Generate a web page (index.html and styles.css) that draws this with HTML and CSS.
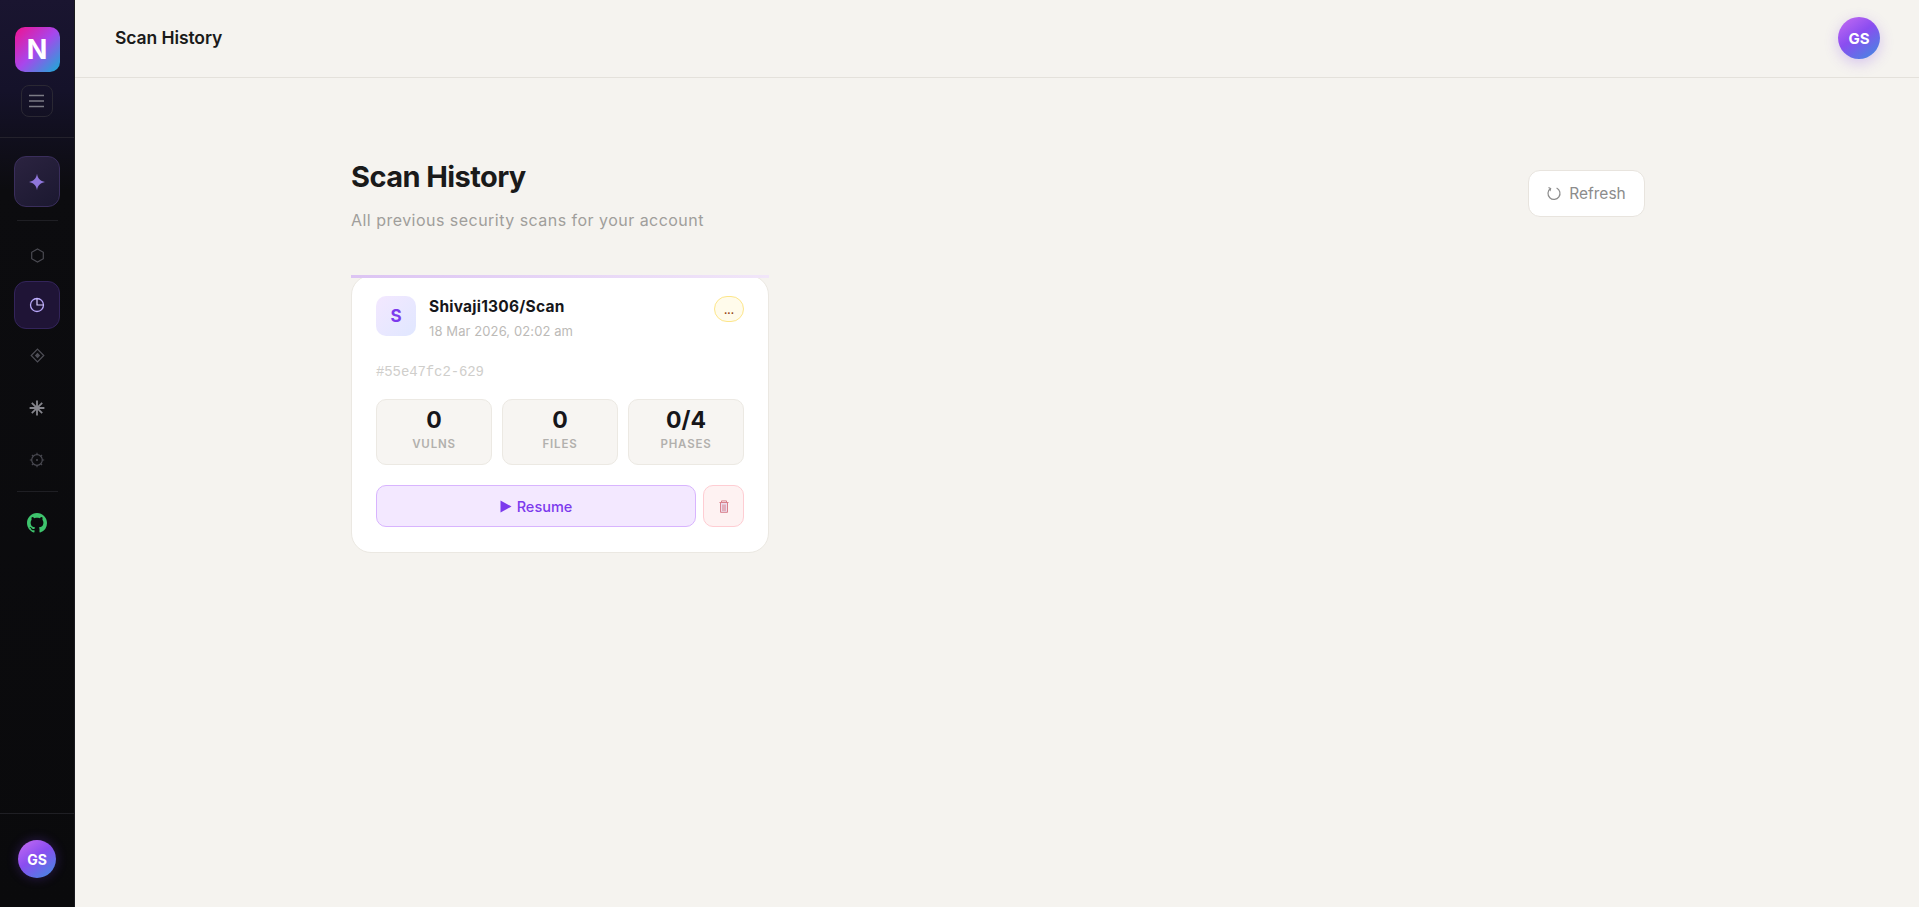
FILE: index.html
```html
<!DOCTYPE html>
<html lang="en">
<head>
<meta charset="utf-8">
<title>Scan History</title>
<link rel="stylesheet" href="styles.css">
</head>
<body>
<div class="app">
  <aside class="sidebar">
    <div class="side-top">
      <div class="logo">N</div>
      <button class="menu-btn" aria-label="Menu">
        <svg width="16" height="14" viewBox="0 0 16 14"><path d="M0 1.500h15M0 7h15M0 12.500h15" stroke="#7b7b85" stroke-width="1.600" fill="none"/></svg>
      </button>
    </div>
    <nav class="side-nav">
      <a class="spark">
        <svg width="18" height="18" viewBox="0 0 18 18"><path d="M9 .8C9.800 5.600 12.200 8.100 17 9c-4.800.9-7.200 3.400-8 8.200C8.200 12.400 5.800 9.900 1 9c4.800-.9 7.200-3.400 8-8.200z" fill="#8f76dc"/></svg>
      </a>
      <hr class="rule">
      <a class="item">
        <svg width="15" height="15" viewBox="0 0 15 15"><path d="M7.500 1l5.800 3.250v6.500L7.500 14l-5.800-3.250v-6.500z" fill="none" stroke="#4a4a52" stroke-width="1.200"/></svg>
      </a>
      <a class="item active">
        <svg width="16" height="16" viewBox="0 0 16 16"><circle cx="8" cy="8" r="6.500" fill="none" stroke="#b9a8fb" stroke-width="1.300"/><path d="M8 1.500V8h6.500" fill="none" stroke="#d9ceff" stroke-width="1.200"/></svg>
      </a>
      <a class="item">
        <svg width="15" height="15" viewBox="0 0 15 15"><path d="M7.500 1.200l6.300 6.300-6.300 6.300-6.300-6.300z" fill="none" stroke="#4e4e56" stroke-width="1.200"/><path d="M7.500 4.800l2.700 2.700-2.700 2.700-2.700-2.700z" fill="#4e4e56"/></svg>
      </a>
      <a class="item item-tall">
        <svg width="16" height="16" viewBox="0 0 16 16"><path d="M8 .6v14.800M.6 8h14.800M2.800 2.800l10.400 10.400M13.200 2.800L2.800 13.200" stroke="#85858c" stroke-width="1.800" fill="none"/><circle cx="8" cy="8" r="2" fill="#85858c"/></svg>
      </a>
      <a class="item item-short">
        <svg width="16" height="16" viewBox="0 0 16 16"><circle cx="8" cy="8" r="5.300" fill="none" stroke="#4a4a52" stroke-width="1.200"/><circle cx="8" cy="8" r="1" fill="#4a4a52"/><path d="M8 .8v2M8 13.200v2M.8 8h2M13.200 8h2M2.900 2.900l1.400 1.400M11.700 11.700l1.400 1.400M13.100 2.900l-1.400 1.400M4.300 11.700l-1.400 1.400" stroke="#4a4a52" stroke-width="1.100"/></svg>
      </a>
      <hr class="rule rule-low">
      <a class="item item-git">
        <svg width="20" height="20" viewBox="0 0 16 16"><path fill="#3ec46d" d="M8 0C3.580 0 0 3.580 0 8c0 3.540 2.290 6.530 5.470 7.590.4.070.55-.17.55-.38 0-.19-.01-.82-.01-1.490-2.010.37-2.530-.49-2.690-.94-.09-.23-.48-.94-.82-1.130-.28-.15-.68-.52-.01-.53.63-.01 1.080.58 1.230.82.72 1.210 1.870.87 2.330.66.070-.52.28-.87.51-1.070-1.780-.2-3.640-.89-3.640-3.950 0-.87.31-1.590.82-2.150-.08-.2-.36-1.020.08-2.120 0 0 .67-.21 2.200.82.640-.18 1.320-.27 2-.27s1.360.09 2 .27c1.530-1.040 2.200-.82 2.200-.82.44 1.100.16 1.920.08 2.120.51.560.82 1.270.82 2.150 0 3.070-1.870 3.750-3.650 3.950.29.250.54.730.54 1.480 0 1.070-.01 1.930-.01 2.200 0 .210.150.460.550.380A8.010 8.010 0 0 0 16 8c0-4.420-3.580-8-8-8z"/></svg>
      </a>
    </nav>
    <div class="side-foot">
      <div class="avatar avatar-side">GS</div>
    </div>
  </aside>
  <div class="main">
    <header class="topbar">
      <div class="top-title">Scan History</div>
      <div class="avatar avatar-top">GS</div>
    </header>
    <main class="content">
      <div class="page-head">
        <div>
          <h1 class="page-title">Scan History</h1>
          <p class="page-sub">All previous security scans for your account</p>
        </div>
        <button class="refresh">
          <svg width="15" height="15" viewBox="0 0 15 15"><path d="M3.400 2.600A6 6 0 1 0 9.600 2" fill="none" stroke="#8c8c8c" stroke-width="1.200"/><path d="M1.500 1.400l2.200 1.200-.7 2.500" fill="none" stroke="#8c8c8c" stroke-width="1.100"/></svg>
          <span>Refresh</span>
        </button>
      </div>
      <div class="grid">
        <article class="card">
          <div class="card-head">
            <div class="repo-icon">S</div>
            <div class="repo-info">
              <div class="repo-name">Shivaji1306/Scan</div>
              <div class="repo-date">18 Mar 2026, 02:02 am</div>
            </div>
            <div class="badge">...</div>
          </div>
          <div class="scan-id">#55e47fc2-629</div>
          <div class="stats">
            <div class="stat"><div class="stat-val">0</div><div class="stat-label">VULNS</div></div>
            <div class="stat"><div class="stat-val">0</div><div class="stat-label">FILES</div></div>
            <div class="stat"><div class="stat-val">0/4</div><div class="stat-label">PHASES</div></div>
          </div>
          <div class="actions">
            <button class="resume"><svg width="12" height="13" viewBox="0 0 12 13"><path d="M.5.5l11 6-11 6z" fill="#7c3aed"/></svg>Resume</button>
            <button class="trash" aria-label="Delete">
              <svg width="10" height="13" viewBox="0 0 10 13"><path d="M1.500 2.500h7v9.800h-7z" fill="#ecdcec"/><path d="M.5 2.500h9M2.500 2.500V.9h5v1.600M1.500 2.500v9.800h7V2.500M4 4.500v6.500M6 4.500v6.500" fill="none" stroke="#d9808c" stroke-width="1"/></svg>
            </button>
          </div>
        </article>
      </div>
    </main>
  </div>
</div>
</body>
</html>
```
FILE: styles.css
```css
* { box-sizing: border-box; }
html, body { margin: 0; height: 100%; }
body {
  font-family: Inter, "Liberation Sans", sans-serif;
  background: #f5f3ef;
  color: #1a1a1a;
  overflow: hidden;
}
button { font-family: inherit; cursor: pointer; }
.app { display: flex; height: 907px; }

.sidebar {
  width: 75px;
  flex: none;
  display: flex;
  flex-direction: column;
  border-right: 1px solid #1a1a1f;
  background: linear-gradient(180deg, #1a1530 0, #15122a 90px, #0c0c0f 190px, #0a0a0c 100%);
}
.side-top {
  height: 138px;
  padding-top: 27px;
  display: flex;
  flex-direction: column;
  align-items: center;
  gap: 13px;
  border-bottom: 1px solid #24222c;
}
.logo {
  width: 45px;
  height: 45px;
  border-radius: 10px;
  background: linear-gradient(135deg, #f0128f 0, #a846ec 50%, #14b1d6 100%);
  color: #fff;
  font-weight: 700;
  font-size: 27px;
  display: flex;
  align-items: center;
  justify-content: center;
}
.menu-btn {
  width: 32px;
  height: 32px;
  border-radius: 8px;
  background: transparent;
  border: 1px solid #2a2833;
  padding: 0;
  display: flex;
  align-items: center;
  justify-content: center;
}
.side-nav {
  flex: 1;
  padding-top: 18px;
  display: flex;
  flex-direction: column;
  align-items: center;
}
.spark {
  width: 46px;
  height: 51px;
  border-radius: 12px;
  background: linear-gradient(145deg, #2b2340, #1b1830);
  border: 1px solid #3a2e5c;
  display: flex;
  align-items: center;
  justify-content: center;
}
.rule {
  width: 41px;
  height: 1px;
  border: 0;
  background: #1f1f24;
  margin: 13px 0 10px;
}
.rule-low { margin: 8px 0 7px; }
.item {
  width: 46px;
  height: 48px;
  margin-bottom: 2px;
  border-radius: 12px;
  border: 1px solid transparent;
  display: flex;
  align-items: center;
  justify-content: center;
}
.item-tall { height: 54px; }
.item-short { height: 46px; margin-bottom: 0; }
.item-git { height: 47px; margin-bottom: 0; }
.active { background: #1f1436; border-color: #33245a; }
.side-foot {
  height: 94px;
  border-top: 1px solid #1f1f24;
  display: flex;
  justify-content: center;
  padding-top: 26px;
}
.avatar {
  border-radius: 50%;
  color: #fff;
  font-weight: 700;
  display: flex;
  align-items: center;
  justify-content: center;
  background: linear-gradient(145deg, #c86df2 0, #8a4df0 45%, #3d8fe0 100%);
}
.avatar-side { width: 38px; height: 38px; font-size: 14px; box-shadow: 0 0 12px rgba(124,58,237,.3); }
.avatar-top { width: 42px; height: 42px; margin-top: 2px; font-size: 15px; box-shadow: 0 4px 14px rgba(124,58,237,.25); }

.main { flex: 1; display: flex; flex-direction: column; min-width: 0; }
.topbar {
  height: 78px;
  flex: none;
  border-bottom: 1px solid #e4e1db;
  padding: 0 39px 3px 40px;
  display: flex;
  align-items: center;
  justify-content: space-between;
}
.top-title { font-size: 17.500px; font-weight: 600; letter-spacing: -.005em; color: #1a1a1a; }
.content { width: 1294px; margin: 0 0 0 276px; padding-top: 78px; }
.page-head { display: flex; justify-content: space-between; align-items: flex-start; margin-bottom: 43px; }
.page-title { margin: 0; font-size: 29px; line-height: 42px; font-weight: 700; letter-spacing: -.02em; color: #1a1a1a; }
.page-sub { margin: 10px 0 0; font-size: 16px; line-height: 24px; letter-spacing: .47px; color: #a09e9b; }
.refresh {
  width: 117px;
  height: 47px;
  margin-top: 14px;
  border-radius: 12px;
  background: #fff;
  border: 1px solid #e8e4de;
  color: #8c8c8c;
  font-size: 15.500px;
  display: flex;
  align-items: center;
  justify-content: center;
  gap: 7px;
  padding: 0;
}
.grid { display: grid; grid-template-columns: repeat(3, 1fr); gap: 20px; }
.card {
  position: relative;
  background: #fff;
  border: 1px solid #ebe8e2;
  border-radius: 20px;
  padding: 20px 24px 25px;
  height: 278px;
}
.card::before {
  content: "";
  position: absolute;
  left: -1px;
  right: -1px;
  top: -1px;
  height: 3px;
  background: linear-gradient(90deg, #dcc4f3, #f1e6f9);
}
.card-head { display: flex; align-items: flex-start; }
.repo-icon {
  width: 40px;
  height: 40px;
  border-radius: 10px;
  background: linear-gradient(135deg, #f3e8ff, #e0e7ff);
  color: #7c3aed;
  font-weight: 700;
  font-size: 17px;
  display: flex;
  align-items: center;
  justify-content: center;
  flex: none;
}
.repo-info { flex: 1; margin-left: 13px; }
.repo-name { font-size: 15.500px; font-weight: 700; line-height: 20px; letter-spacing: .015em; margin-top: 1px; color: #16161a; }
.repo-date { font-size: 13px; line-height: 18px; margin-top: 5px; letter-spacing: .1px; color: #bcbab7; }
.badge {
  width: 30px;
  height: 26px;
  border-radius: 13px;
  background: #fffbeb;
  border: 1px solid #fde68a;
  color: #92400e;
  font-size: 10px;
  font-weight: 700;
  text-align: center;
  line-height: 26px;
}
.scan-id {
  margin-top: 23px;
  font-family: "Liberation Mono", "DejaVu Sans Mono", monospace;
  font-size: 14px;
  letter-spacing: -.1px;
  line-height: 18px;
  color: #cfcecb;
}
.stats { display: grid; grid-template-columns: repeat(3, 1fr); gap: 10px; margin-top: 18px; }
.stat {
  height: 66px;
  border-radius: 10px;
  background: #f7f5f2;
  border: 1px solid #ece9e3;
  text-align: center;
  padding-top: 5px;
}
.stat-val { font-size: 23px; font-weight: 700; line-height: 30px; color: #16161a; }
.stat-label { font-size: 11.500px; font-weight: 600; letter-spacing: .07em; line-height: 16px; margin-top: 1px; color: #b2b0ad; }
.actions { display: flex; gap: 7px; margin-top: 20px; }
.resume {
  flex: 1;
  height: 42px;
  border-radius: 10px;
  background: #f3e8ff;
  border: 1px solid #d8b4fe;
  color: #7c3aed;
  font-size: 14.500px;
  font-weight: 500;
  display: flex;
  align-items: center;
  justify-content: center;
  gap: 5px;
  padding: 0;
}
.trash {
  width: 41px;
  height: 42px;
  border-radius: 10px;
  background: #fef2f2;
  border: 1px solid #fecdd3;
  display: flex;
  align-items: center;
  justify-content: center;
  padding: 0;
}
```
